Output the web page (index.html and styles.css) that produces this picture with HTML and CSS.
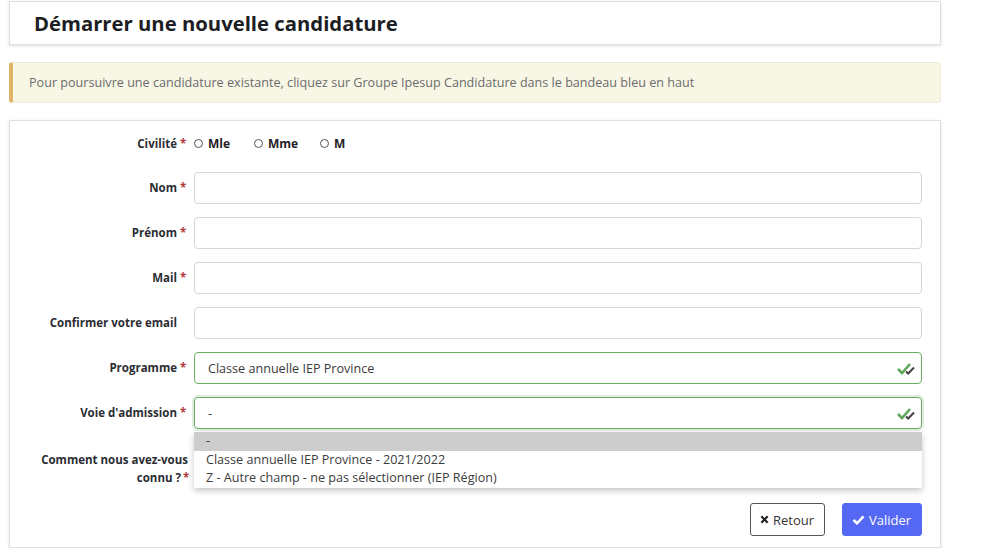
FILE: index.html
```html
<!DOCTYPE html>
<html lang="fr">
<head>
<meta charset="utf-8">
<title>Démarrer une nouvelle candidature</title>
<link rel="stylesheet" href="styles.css">
</head>
<body>
<div class="page">
  <div class="card head">
    <h1 class="title">Démarrer une nouvelle candidature</h1>
  </div>
  <div class="alert">Pour poursuivre une candidature existante, cliquez sur Groupe Ipesup Candidature dans le bandeau bleu en haut</div>
  <form class="card form">
    <div class="row row-radio">
      <label class="lbl">Civilité<span class="req">*</span></label>
      <div class="radios">
        <label class="radio"><span class="dot"></span>Mle</label>
        <label class="radio"><span class="dot"></span>Mme</label>
        <label class="radio"><span class="dot"></span>M</label>
      </div>
    </div>
    <div class="row">
      <label class="lbl">Nom<span class="req">*</span></label>
      <div class="input"></div>
    </div>
    <div class="row">
      <label class="lbl">Prénom<span class="req">*</span></label>
      <div class="input"></div>
    </div>
    <div class="row">
      <label class="lbl">Mail<span class="req">*</span></label>
      <div class="input"></div>
    </div>
    <div class="row">
      <label class="lbl">Confirmer votre email<span class="req none"></span></label>
      <div class="input"></div>
    </div>
    <div class="row">
      <label class="lbl">Programme<span class="req">*</span></label>
      <div class="input valid">Classe annuelle IEP Province<svg class="chk" viewBox="0 0 20 14" width="20" height="14"><path d="M2 7l4 4 8-9" fill="none" stroke="#5ea85a" stroke-width="2.6"/><path d="M10 9.5l2.2 2L18 5.5" fill="none" stroke="#444" stroke-width="2"/></svg></div>
    </div>
    <div class="row">
      <label class="lbl">Voie d'admission<span class="req">*</span></label>
      <div class="input valid focus">-<svg class="chk" viewBox="0 0 20 14" width="20" height="14"><path d="M2 7l4 4 8-9" fill="none" stroke="#5ea85a" stroke-width="2.6"/><path d="M10 9.5l2.2 2L18 5.5" fill="none" stroke="#444" stroke-width="2"/></svg>
        <ul class="menu">
          <li class="sel">-</li>
          <li>Classe annuelle IEP Province - 2021/2022</li>
          <li>Z - Autre champ - ne pas sélectionner (IEP Région)</li>
        </ul>
      </div>
    </div>
    <div class="row row-comment">
      <label class="lbl lbl2">Comment nous avez-vous connu ?<span class="req">*</span></label>
      <div class="input hidden"></div>
    </div>
    <div class="actions">
      <button type="button" class="btn btn-back"><svg viewBox="0 0 10 10" width="9" height="9"><path d="M1.5 1.5l7 7M8.5 1.5l-7 7" stroke="#222" stroke-width="2.4"/></svg>Retour</button>
      <button type="button" class="btn btn-ok"><svg viewBox="0 0 14 11" width="13" height="10"><path d="M1.5 5.5l3.8 3.6L12.5 1.5" fill="none" stroke="#fff" stroke-width="2.8"/></svg>Valider</button>
    </div>
  </form>
</div>
</body>
</html>
```

FILE: styles.css
```css
* { box-sizing: border-box; }
html, body { margin: 0; padding: 0; background: #fff; }
body {
  font-family: "Open Sans", "Noto Sans", sans-serif;
  font-size: 12px;
  color: #212529;
}
.page {
  width: 932px;
  margin-left: 9px;
  padding-top: 1px;
  display: flex;
  flex-direction: column;
}
.card {
  background: #fff;
  border: 1px solid #dcdfe3;
  box-shadow: 0 1px 3px rgba(0,0,0,0.12);
}
.head {
  height: 44px;
  display: flex;
  align-items: center;
  padding-left: 24px;
}
.title {
  margin: 0;
  font-size: 20.3px;
  font-weight: 700;
  color: #1c1e24;
}
.alert {
  margin-top: 17px;
  height: 41px;
  background: #f8f7e6;
  border: 1px solid #ecebd8;
  border-left: 4px solid #e0b466;
  border-radius: 3px;
  display: flex;
  align-items: center;
  padding-left: 16px;
  color: #6b6b6b;
  font-size: 12.6px;
}
.form {
  margin-top: 17px;
  height: 428px;
  padding: 14px 18px 0 0;
  display: flex;
  flex-direction: column;
}
.row {
  display: flex;
  align-items: center;
  height: 32px;
  margin-bottom: 13px;
}
.row-radio {
  height: 16px;
  margin-bottom: 21px;
}
.lbl {
  width: 184px;
  flex: none;
  padding-right: 9px;
  padding-bottom: 2px;
  text-align: right;
  font-weight: 700;
  color: #2b2d33;
  font-size: 11.5px;
}
.row-radio .lbl { padding-bottom: 0; }
.req {
  color: #b0393c;
  margin-left: 3px;
  display: inline-block;
  width: 5px;
  text-align: left;
}
.radios {
  display: flex;
}
.radio {
  display: flex;
  align-items: center;
  font-weight: 700;
  color: #1f2126;
  width: 60px;
}
.radio:nth-child(2) { width: 66px; }
.dot {
  width: 9px;
  height: 9px;
  border: 1px solid #555;
  border-radius: 50%;
  margin-right: 5px;
}
.input {
  position: relative;
  flex: 1;
  height: 32px;
  border: 1px solid #d2d5d9;
  border-radius: 4px;
  display: flex;
  align-items: center;
  padding-left: 13px;
  color: #3a3a3a;
  font-size: 12.6px;
}
.input.valid { border-color: #6aad63; }
.input.focus { box-shadow: 0 0 0 2px rgba(106,173,99,0.22); }
.chk {
  position: absolute;
  right: 5px;
  top: 9px;
}
.menu {
  position: absolute;
  left: -1px;
  right: -1px;
  top: 34px;
  margin: 0;
  padding: 0;
  list-style: none;
  background: #fff;
  box-shadow: 0 3px 6px rgba(0,0,0,0.22);
  z-index: 2;
}
.menu li {
  height: 18.5px;
  line-height: 18px;
  padding-left: 12px;
  color: #3c3c3c;
  font-size: 12.6px;
}
.menu li.sel { background: #cdcdcd; }
.row-comment { margin-bottom: 0; height: 52px; align-items: flex-start; padding-top: 9px; }
.lbl2 { padding-left: 20px; line-height: 18px; padding-right: 6px; padding-bottom: 0; }
.lbl2 .req { margin-left: 2px; }
.hidden { visibility: hidden; }
.actions {
  display: flex;
  justify-content: flex-end;
  gap: 17px;
  margin-top: 9px;
}
.btn {
  height: 33px;
  border-radius: 3px;
  font-family: inherit;
  font-size: 13px;
  display: flex;
  align-items: center;
  gap: 4px;
  padding: 0 9px;
  cursor: pointer;
}
.btn-back {
  width: 75px;
  background: #fff;
  border: 1px solid #555;
  color: #333;
}
.btn-ok {
  width: 80px;
  background: #5468f4;
  border: 1px solid #5468f4;
  color: #fff;
}
```
